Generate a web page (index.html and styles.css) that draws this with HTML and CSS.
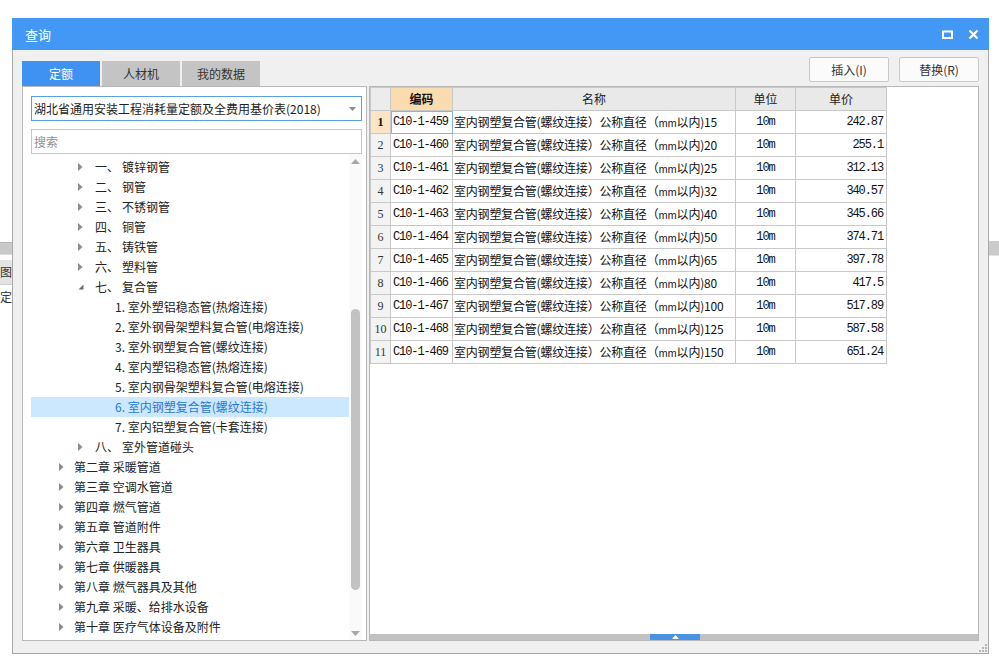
FILE: index.html
```html
<!DOCTYPE html>
<html lang="zh-CN">
<head>
<meta charset="utf-8">
<title>查询</title>
<link rel="stylesheet" href="styles.css">
</head>
<body>
<div class="backdrop">
  <div class="bg-left">
    <div class="bl-band"></div>
    <div class="bl-row bl-gray">图</div>
    <div class="bl-row">定</div>
  </div>
  <div class="bg-right">
    <div class="br-band"></div>
  </div>
</div>

<div class="dialog">
  <div class="titlebar">
    <span class="title">查询</span>
    <div class="winbtns">
      <svg width="11" height="9" viewBox="0 0 11 9"><rect x="1" y="1.5" width="9" height="6.5" fill="none" stroke="#fff" stroke-width="2"/></svg>
      <svg width="11" height="11" viewBox="0 0 11 11"><path d="M1.5 1.5 L9.5 9.5 M9.5 1.5 L1.5 9.5" stroke="#fff" stroke-width="2.2"/></svg>
    </div>
  </div>
  <div class="body">
    <div class="toolbar">
      <div class="tabs">
        <div class="tab active">定额</div>
        <div class="tab">人材机</div>
        <div class="tab">我的数据</div>
      </div>
      <div class="actions">
        <button class="btn">插入(I)</button>
        <button class="btn">替换(R)</button>
      </div>
    </div>
    <div class="panels">
      <div class="left">
        <div class="select">
          <span>湖北省通用安装工程消耗量定额及全费用基价表(2018)</span>
          <svg width="7" height="4" viewBox="0 0 7 4"><path d="M0 0 L7 0 L3.5 4 Z" fill="#8a8a8a"/></svg>
        </div>
        <div class="search">搜索</div>
        <div class="tree">
          <div class="tree-list">
            <div class="row l1"><span class="arr"><svg width="5" height="8" viewBox="0 0 5 8"><path d="M0 0 L4.5 4 L0 8 Z" fill="#8c8c8c"/></svg></span><span class="num">一、</span>镀锌钢管</div>
            <div class="row l1"><span class="arr"><svg width="5" height="8" viewBox="0 0 5 8"><path d="M0 0 L4.5 4 L0 8 Z" fill="#8c8c8c"/></svg></span><span class="num">二、</span>钢管</div>
            <div class="row l1"><span class="arr"><svg width="5" height="8" viewBox="0 0 5 8"><path d="M0 0 L4.5 4 L0 8 Z" fill="#8c8c8c"/></svg></span><span class="num">三、</span>不锈钢管</div>
            <div class="row l1"><span class="arr"><svg width="5" height="8" viewBox="0 0 5 8"><path d="M0 0 L4.5 4 L0 8 Z" fill="#8c8c8c"/></svg></span><span class="num">四、</span>铜管</div>
            <div class="row l1"><span class="arr"><svg width="5" height="8" viewBox="0 0 5 8"><path d="M0 0 L4.5 4 L0 8 Z" fill="#8c8c8c"/></svg></span><span class="num">五、</span>铸铁管</div>
            <div class="row l1"><span class="arr"><svg width="5" height="8" viewBox="0 0 5 8"><path d="M0 0 L4.5 4 L0 8 Z" fill="#8c8c8c"/></svg></span><span class="num">六、</span>塑料管</div>
            <div class="row l1"><span class="arr"><svg width="6" height="6" viewBox="0 0 6 6"><path d="M5.5 0.5 L5.5 5.5 L0.5 5.5 Z" fill="#6b6b6b"/></svg></span><span class="num">七、</span>复合管</div>
            <div class="row l2">1. 室外塑铝稳态管(热熔连接)</div>
            <div class="row l2">2. 室外钢骨架塑料复合管(电熔连接)</div>
            <div class="row l2">3. 室外钢塑复合管(螺纹连接)</div>
            <div class="row l2">4. 室内塑铝稳态管(热熔连接)</div>
            <div class="row l2">5. 室内钢骨架塑料复合管(电熔连接)</div>
            <div class="row l2 selected">6. 室内钢塑复合管(螺纹连接)</div>
            <div class="row l2">7. 室内铝塑复合管(卡套连接)</div>
            <div class="row l1"><span class="arr"><svg width="5" height="8" viewBox="0 0 5 8"><path d="M0 0 L4.5 4 L0 8 Z" fill="#8c8c8c"/></svg></span><span class="num">八、</span>室外管道碰头</div>
            <div class="row ch"><span class="arr"><svg width="5" height="8" viewBox="0 0 5 8"><path d="M0 0 L4.5 4 L0 8 Z" fill="#8c8c8c"/></svg></span>第二章 采暖管道</div>
            <div class="row ch"><span class="arr"><svg width="5" height="8" viewBox="0 0 5 8"><path d="M0 0 L4.5 4 L0 8 Z" fill="#8c8c8c"/></svg></span>第三章 空调水管道</div>
            <div class="row ch"><span class="arr"><svg width="5" height="8" viewBox="0 0 5 8"><path d="M0 0 L4.5 4 L0 8 Z" fill="#8c8c8c"/></svg></span>第四章 燃气管道</div>
            <div class="row ch"><span class="arr"><svg width="5" height="8" viewBox="0 0 5 8"><path d="M0 0 L4.5 4 L0 8 Z" fill="#8c8c8c"/></svg></span>第五章 管道附件</div>
            <div class="row ch"><span class="arr"><svg width="5" height="8" viewBox="0 0 5 8"><path d="M0 0 L4.5 4 L0 8 Z" fill="#8c8c8c"/></svg></span>第六章 卫生器具</div>
            <div class="row ch"><span class="arr"><svg width="5" height="8" viewBox="0 0 5 8"><path d="M0 0 L4.5 4 L0 8 Z" fill="#8c8c8c"/></svg></span>第七章 供暖器具</div>
            <div class="row ch"><span class="arr"><svg width="5" height="8" viewBox="0 0 5 8"><path d="M0 0 L4.5 4 L0 8 Z" fill="#8c8c8c"/></svg></span>第八章 燃气器具及其他</div>
            <div class="row ch"><span class="arr"><svg width="5" height="8" viewBox="0 0 5 8"><path d="M0 0 L4.5 4 L0 8 Z" fill="#8c8c8c"/></svg></span>第九章 采暖、给排水设备</div>
            <div class="row ch"><span class="arr"><svg width="5" height="8" viewBox="0 0 5 8"><path d="M0 0 L4.5 4 L0 8 Z" fill="#8c8c8c"/></svg></span>第十章 医疗气体设备及附件</div>
          </div>
          <div class="vscroll">
            <div class="sb-arrow"><svg width="9" height="5" viewBox="0 0 9 5"><path d="M0 5 L4.5 0 L9 5 Z" fill="#a8a8a8"/></svg></div>
            <div class="sb-track"><div class="sb-thumb"></div></div>
            <div class="sb-arrow"><svg width="9" height="5" viewBox="0 0 9 5"><path d="M0 0 L9 0 L4.5 5 Z" fill="#a8a8a8"/></svg></div>
          </div>
        </div>
      </div>
      <div class="right">
        <div class="grid-area">
          <table class="grid">
            <colgroup>
              <col class="c-no"><col class="c-code"><col class="c-name"><col class="c-unit"><col class="c-price">
            </colgroup>
            <thead>
              <tr><th class="corner"></th><th class="sel">编码</th><th>名称</th><th>单位</th><th>单价</th></tr>
            </thead>
            <tbody>
              <tr class="cur"><td class="no">1</td><td class="code focus">C10-1-459</td><td class="name">室内钢塑复合管(螺纹连接）公称直径（<span class="mm">mm</span>以内)15</td><td class="unit">10m</td><td class="price">242.87</td></tr>
              <tr><td class="no">2</td><td class="code">C10-1-460</td><td class="name">室内钢塑复合管(螺纹连接）公称直径（<span class="mm">mm</span>以内)20</td><td class="unit">10m</td><td class="price">255.1</td></tr>
              <tr><td class="no">3</td><td class="code">C10-1-461</td><td class="name">室内钢塑复合管(螺纹连接）公称直径（<span class="mm">mm</span>以内)25</td><td class="unit">10m</td><td class="price">312.13</td></tr>
              <tr><td class="no">4</td><td class="code">C10-1-462</td><td class="name">室内钢塑复合管(螺纹连接）公称直径（<span class="mm">mm</span>以内)32</td><td class="unit">10m</td><td class="price">340.57</td></tr>
              <tr><td class="no">5</td><td class="code">C10-1-463</td><td class="name">室内钢塑复合管(螺纹连接）公称直径（<span class="mm">mm</span>以内)40</td><td class="unit">10m</td><td class="price">345.66</td></tr>
              <tr><td class="no">6</td><td class="code">C10-1-464</td><td class="name">室内钢塑复合管(螺纹连接）公称直径（<span class="mm">mm</span>以内)50</td><td class="unit">10m</td><td class="price">374.71</td></tr>
              <tr><td class="no">7</td><td class="code">C10-1-465</td><td class="name">室内钢塑复合管(螺纹连接）公称直径（<span class="mm">mm</span>以内)65</td><td class="unit">10m</td><td class="price">397.78</td></tr>
              <tr><td class="no">8</td><td class="code">C10-1-466</td><td class="name">室内钢塑复合管(螺纹连接）公称直径（<span class="mm">mm</span>以内)80</td><td class="unit">10m</td><td class="price">417.5</td></tr>
              <tr><td class="no">9</td><td class="code">C10-1-467</td><td class="name">室内钢塑复合管(螺纹连接）公称直径（<span class="mm">mm</span>以内)100</td><td class="unit">10m</td><td class="price">517.89</td></tr>
              <tr><td class="no">10</td><td class="code">C10-1-468</td><td class="name">室内钢塑复合管(螺纹连接）公称直径（<span class="mm">mm</span>以内)125</td><td class="unit">10m</td><td class="price">587.58</td></tr>
              <tr><td class="no">11</td><td class="code">C10-1-469</td><td class="name">室内钢塑复合管(螺纹连接）公称直径（<span class="mm">mm</span>以内)150</td><td class="unit">10m</td><td class="price">651.24</td></tr>
            </tbody>
          </table>
        </div>
        <div class="hscroll">
          <div class="h-thumb"><svg width="7" height="4" viewBox="0 0 7 4"><path d="M0 4 L3.5 0 L7 4 Z" fill="#fff"/></svg></div>
        </div>
      </div>
    </div>
    <div class="statusbar">
      <svg class="grip" width="8" height="8" viewBox="0 0 8 8"><g fill="#b5b5b5"><rect x="6" y="0" width="2" height="2"/><rect x="3" y="3" width="2" height="2"/><rect x="6" y="3" width="2" height="2"/><rect x="0" y="6" width="2" height="2"/><rect x="3" y="6" width="2" height="2"/><rect x="6" y="6" width="2" height="2"/></g></svg>
    </div>
  </div>
</div>
</body>
</html>
```

FILE: styles.css
```css
html, body {
  margin: 0;
  padding: 0;
  background: #ffffff;
  font-family: "Noto Sans CJK SC", "Liberation Sans", sans-serif;
  font-size: 12px;
  color: #222;
}

body {
  position: relative;
  width: 999px;
  height: 661px;
  overflow: hidden;
}

/* stuff from the app window behind the dialog */
.backdrop {
  position: absolute;
  inset: 0;
  z-index: 0;
}
.bg-left {
  position: absolute;
  left: 0;
  top: 242px;
  width: 12px;
}
.bl-band {
  height: 11px;
  background: #c9c9c9;
  border-top: 1px solid #b5b5b5;
  border-bottom: 1px solid #dcdcdc;
  margin-bottom: 5px;
}
.bl-row {
  height: 24px;
  line-height: 24px;
  font-size: 12px;
  color: #333;
  white-space: nowrap;
}
.bl-gray {
  background: #e4e4e4;
  border-bottom: 1px solid #d0d0d0;
}
.bg-right {
  position: absolute;
  left: 989px;
  top: 241px;
  width: 10px;
}
.br-band {
  height: 14px;
  background: #cbcbcb;
  border-bottom: 1px solid #e2e2e2;
}

/* dialog */
.dialog {
  position: relative;
  z-index: 1;
  margin: 18px 0 0 12px;
  width: 977px;
}
.titlebar {
  height: 32px;
  background: #4398f6;
  display: flex;
  align-items: center;
  justify-content: space-between;
  padding: 0 10px 0 13px;
}
.title {
  color: #fff;
  font-size: 13px;
}
.winbtns {
  display: flex;
  align-items: center;
  gap: 15px;
}
.winbtns svg {
  display: block;
}

.body {
  background: #f0f0f0;
  border: 1px solid #a9a9a9;
  border-top: none;
  padding: 0 9px;
}

.toolbar {
  height: 36px;
  display: flex;
  justify-content: space-between;
}
.tabs {
  align-self: flex-end;
  display: flex;
  gap: 2px;
}
.tab {
  width: 78px;
  height: 25px;
  line-height: 25px;
  text-align: center;
  background: #c4c4c4;
  color: #333;
}
.tab.active {
  background: #3f92f1;
  color: #fff;
}
.actions {
  display: flex;
  gap: 10px;
  margin-top: 7px;
}
.btn {
  width: 80px;
  height: 25px;
  padding: 0;
  background: #fbfbfb;
  border: 1px solid #c9c9c9;
  border-radius: 2px;
  font-family: "Noto Sans CJK SC", "Liberation Sans", sans-serif;
  font-size: 12px;
  color: #333;
}

.panels {
  height: 555px;
  display: flex;
  gap: 2px;
}

/* left panel */
.left {
  width: 345px;
  box-sizing: border-box;
  border: 1px solid #b8b8b8;
  background: #fff;
  padding: 9px 4px 0 8px;
  display: flex;
  flex-direction: column;
}
.select {
  height: 25px;
  box-sizing: border-box;
  border: 1px solid #5b9fe6;
  display: flex;
  align-items: center;
  justify-content: space-between;
  padding: 0 5px 0 2px;
  color: #222;
  font-size: 12px;
  white-space: nowrap;
}
.select svg { display: block; }
.search {
  margin-top: 8px;
  height: 25px;
  box-sizing: border-box;
  border: 1px solid #c6c6c6;
  line-height: 23px;
  padding-left: 2px;
  color: #8f8f8f;
}
.tree {
  flex: 1;
  display: flex;
  min-height: 0;
}
.tree-list {
  flex: 1;
  padding-top: 3px;
  overflow: hidden;
}
.row {
  height: 20px;
  line-height: 20px;
  display: flex;
  align-items: center;
  white-space: nowrap;
  color: #222;
}
.row .arr {
  display: flex;
  align-items: center;
  height: 20px;
}
.row .arr svg { display: block; }
.row.l1 { padding-left: 47px; }
.row.l1 .arr { width: 17px; }
.row.l1 .num { width: 27px; }
.row.l2 { padding-left: 84px; }
.row.ch { padding-left: 28px; }
.row.ch .arr { width: 15px; }
.row.selected {
  background: #cce8ff;
  color: #2a78d2;
}

.vscroll {
  width: 13px;
  display: flex;
  flex-direction: column;
  background: #fafafa;
}
.sb-arrow {
  height: 14px;
  display: flex;
  align-items: center;
  justify-content: center;
}
.sb-arrow svg { display: block; }
.sb-track {
  flex: 1;
  display: flex;
  justify-content: center;
}
.sb-thumb {
  width: 9px;
  height: 281px;
  margin-top: 141px;
  background: #c2c2c2;
  border-radius: 5px;
}

/* right panel */
.right {
  flex: 1;
  box-sizing: border-box;
  border: 1px solid #b8b8b8;
  background: #fff;
  display: flex;
  flex-direction: column;
}
.grid-area {
  flex: 1;
  overflow: hidden;
}
.grid {
  border-collapse: collapse;
  table-layout: fixed;
  width: 516px;
}
.c-no { width: 20px; }
.c-code { width: 62px; }
.c-name { width: 283px; }
.c-unit { width: 60px; }
.c-price { width: 91px; }

.grid th,
.grid td {
  border: 1px solid #c8c8c8;
  padding: 0;
  white-space: nowrap;
  overflow: hidden;
}
.grid th {
  height: 22px;
  background: #e9e9e9;
  font-weight: normal;
  color: #222;
  text-align: center;
  font-size: 12px;
  line-height: 22px;
}
.grid th.sel {
  background: #fbdcb0;
  font-weight: bold;
  color: #111;
}
.grid th.corner {
  background: #ececec;
}
.grid td {
  height: 22px;
  line-height: 22px;
  color: #111;
}
.grid td.no {
  background: #f3f3f3;
  text-align: center;
  font-family: "Liberation Serif", "Noto Sans CJK SC", serif;
  font-size: 12px;
  color: #333;
}
.grid tr.cur td.no {
  background: #fbe5c4;
  font-weight: bold;
  color: #111;
}
.grid td.code,
.grid td.unit,
.grid td.price {
  font-family: "Liberation Mono", "Noto Sans CJK SC", monospace;
  font-size: 12px;
  letter-spacing: -1.1px;
}
.grid td.code { padding-left: 2px; }
.grid td.unit { text-align: center; }
.grid td.price { text-align: right; padding-right: 3px; }
.grid td.name {
  padding-left: 1px;
  font-size: 12px;
  letter-spacing: -0.2px;
}
.grid td.name .mm {
  font-size: 10px;
  line-height: 1;
}
.grid td.focus {
  outline: 1px solid #8fb0dc;
  outline-offset: -1px;
}

.hscroll {
  height: 6px;
  background: #c2c2c2;
  display: flex;
}
.h-thumb {
  width: 50px;
  margin-left: 280px;
  background: #4a92e6;
  display: flex;
  justify-content: center;
  align-items: center;
}
.h-thumb svg { display: block; }

.statusbar {
  height: 12px;
  display: flex;
  justify-content: flex-end;
  align-items: flex-end;
  margin-right: -8px;
}
.grip {
  display: block;
  margin-bottom: 1px;
}
```
